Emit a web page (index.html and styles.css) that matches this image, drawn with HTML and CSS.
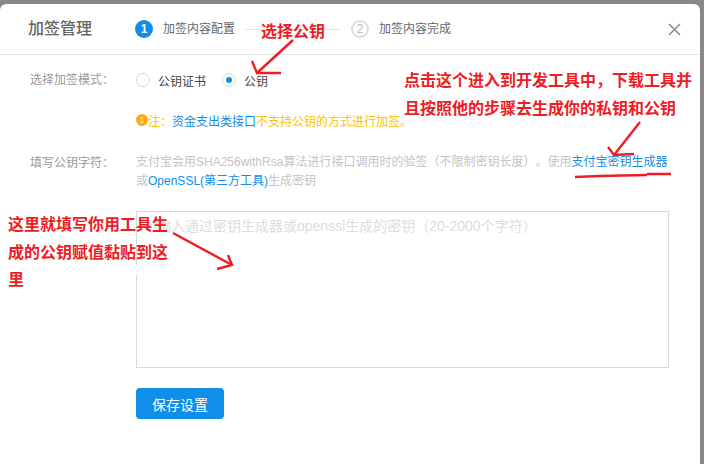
FILE: index.html
```html
<!DOCTYPE html>
<html lang="zh-CN">
<head>
<meta charset="utf-8">
<title>加签管理</title>
<link rel="stylesheet" href="styles.css">
</head>
<body>
<div class="modal">
  <header class="head">
    <h1 class="title">加签管理</h1>
    <div class="steps">
      <span class="num num-on">1</span><span class="step-text">加签内容配置</span>
      <span class="step-line"></span>
      <span class="num num-off">2</span><span class="step-text">加签内容完成</span>
    </div>
    <svg class="close" width="13" height="13" viewBox="0 0 13 13"><path d="M1 1l11 11M12 1L1 12" stroke="#8c8c8c" stroke-width="1.6" fill="none"/></svg>
  </header>
  <main class="form">
    <div class="row row-mode">
      <div class="label">选择加签模式：</div>
      <div class="radios">
        <span class="radio"></span><span class="radio-text">公钥证书</span>
        <span class="radio radio-on"></span><span class="radio-text">公钥</span>
      </div>
    </div>
    <div class="row row-note">
      <div class="label"></div>
      <div class="note"><span class="note-icon">1</span>注：<a class="link">资金支出类接口</a>不支持公钥的方式进行加签。</div>
    </div>
    <div class="row row-key">
      <div class="label">填写公钥字符：</div>
      <div class="desc">支付宝会用SHA256withRsa算法进行接口调用时的验签（不限制密钥长度）。使用<a class="link">支付宝密钥生成器</a><br>或<a class="link">OpenSSL(第三方工具)</a>生成密钥</div>
    </div>
    <div class="row row-area">
      <div class="label"></div>
      <div class="area"><span class="ph-hidden">请</span>输入通过密钥生成器或openssl生成的密钥（20-2000个字符）</div>
    </div>
    <div class="row row-btn">
      <div class="label"></div>
      <button class="save">保存设置</button>
    </div>
  </main>
</div>

<svg class="ink" width="704" height="464" viewBox="0 0 704 464">
  <rect x="130" y="265" width="12" height="10" fill="#fff"/>
  <g fill="none" stroke="#ee1c25" stroke-width="2.4">
    <path d="M293 40L257 73"/>
    <path d="M252 61L257 73L281 73"/>
    <path d="M640 122L614 155"/>
    <path d="M608 147L614 155L634 154"/>
    <path d="M575 177L600 176L647 175M647 174L671 174"/>
    <path d="M173 233L232 265"/>
    <path d="M228 255L232 265L217 269"/>
  </g>
</svg>
<div class="note-red n1">选择公钥</div>
<div class="note-red n2">点击这个进入到开发工具中，下载工具并<br>且按照他的步骤去生成你的私钥和公钥</div>
<div class="note-red n3">这里就填写你用工具生<br>成的公钥赋值黏贴到这<br>里</div>
</body>
</html>
```
FILE: styles.css
```css
* { box-sizing: border-box; }
html, body { margin: 0; height: 100%; overflow: hidden; }
body {
  background: #888;
  font-family: "Liberation Sans", "Noto Sans CJK SC", sans-serif;
  font-size: 12px;
  color: #333;
  padding-top: 4px;
}
.modal {
  width: 700px;
  height: 460px;
  background: #fff;
  border-radius: 6px 6px 0 0;
}
.head {
  height: 51px;
  border-bottom: 1px solid #e4e4e4;
  display: flex;
  align-items: center;
  padding: 0 19px 0 28px;
}
.title { margin: 0; width: 107px; font-size: 16px; font-weight: 500; color: #666; line-height: 22px; }
.steps { display: flex; align-items: center; flex: 1; }
.num {
  width: 18px; height: 18px; border-radius: 50%;
  display: flex; align-items: center; justify-content: center;
  font-size: 12px; font-weight: 700;
}
.num-on { background: #108ee9; color: #fff; }
.num-off { border: 2px solid #ddd; color: #bbb; font-weight: 400; }
.step-text { margin-left: 10px; color: #666; line-height: 18px; }
.step-line { width: 96px; height: 1px; background: #e4e4e4; margin: 0 10px; }
.form { padding-top: 14px; }
.row { display: flex; }
.label { width: 136px; padding-left: 30px; color: #999; flex: none; line-height: 20px; }
.row-mode { height: 22px; align-items: center; }
.radios { display: flex; align-items: center; }
.radio { width: 14px; height: 14px; border: 1px solid #d9d9d9; border-radius: 50%; display: flex; align-items: center; justify-content: center; }
.radio-on::after { content: ""; width: 6px; height: 6px; border-radius: 50%; background: #108ee9; }
.radio-text { margin: 0 16px 0 8px; color: #444; }
.row-note { margin-top: 19px; height: 20px; align-items: center; }
.note { color: #ffbf00; display: flex; align-items: center; white-space: nowrap; }
.note-icon {
  width: 12px; height: 12px; border-radius: 50%; background: #ffaa14; color: #ffe9b8;
  display: flex; align-items: center; justify-content: center; font-size: 9px;
}
.link { color: #108ee9; }
.row-key { margin-top: 23px; }
.desc { color: #c4c4c4; line-height: 19px; white-space: nowrap; text-spacing-trim: space-all; font-feature-settings: "chws" 0; }
.row-area { margin-top: 20px; }
.area {
  width: 533px; height: 157px; border: 1px solid #d9d9d9;
  padding: 4px 6px; color: #ddd; font-size: 14px; line-height: 20px; white-space: nowrap;
}
.ph-hidden { visibility: hidden; }
.row-btn { margin-top: 20px; }
.save {
  width: 88px; height: 31px; border: 0; border-radius: 4px; padding: 0;
  background: #108ee9; color: #fff; font: 14px "Liberation Sans", "Noto Sans CJK SC", sans-serif;
}
.ink { position: absolute; left: 0; top: 0; pointer-events: none; }
.note-red { position: absolute; color: #ee1c25; font-size: 16px; line-height: 28px; font-weight: 700; white-space: nowrap; }
.n1 { left: 261px; top: 18px; }
.n2 { left: 404px; top: 67px; }
.n3 { left: 8px; top: 211px; line-height: 27.5px; }
.close { flex: none; }
```
